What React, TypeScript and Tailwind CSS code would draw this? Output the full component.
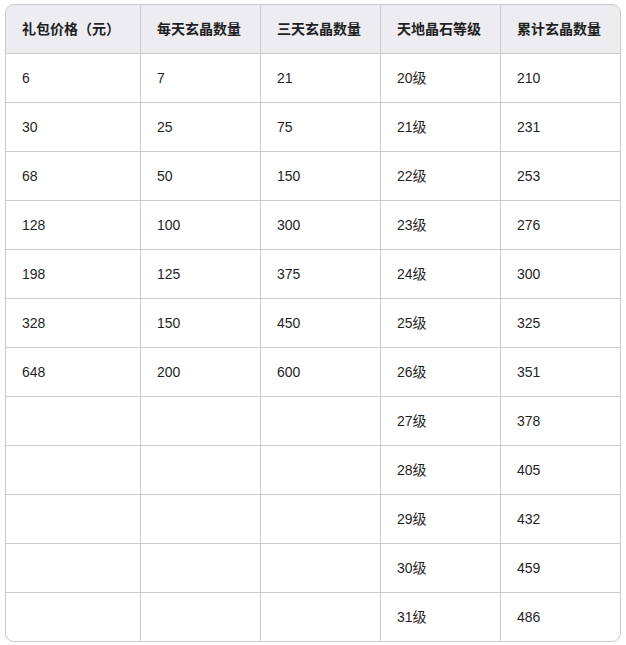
import React from "react";

const headers = ["礼包价格（元）", "每天玄晶数量", "三天玄晶数量", "天地晶石等级", "累计玄晶数量"];
const rows: string[][] = [
  ["6", "7", "21", "20级", "210"],
  ["30", "25", "75", "21级", "231"],
  ["68", "50", "150", "22级", "253"],
  ["128", "100", "300", "23级", "276"],
  ["198", "125", "375", "24级", "300"],
  ["328", "150", "450", "25级", "325"],
  ["648", "200", "600", "26级", "351"],
  ["", "", "", "27级", "378"],
  ["", "", "", "28级", "405"],
  ["", "", "", "29级", "432"],
  ["", "", "", "30级", "459"],
  ["", "", "", "31级", "486"],
];

export default function App() {
  return (
    <div
      className="w-[626px] h-[645px] bg-white pl-[5px] pt-[4px]"
      style={{ fontFamily: '"Liberation Sans", Arial, "Noto Sans CJK SC", sans-serif' }}
    >
      <div className="w-[616px] rounded-[9px] border border-[#cacacf] bg-[#cacacf] overflow-hidden">
        <div className="grid grid-cols-[134px_119px_119px_119px_119px] gap-px">
          {headers.map((h, i) => (
            <div
              key={"h" + i}
              className="h-[48px] bg-[#ececf1] flex items-center pl-[16px] text-[14px] font-bold text-[#1f1f1f]"
            >
              {h}
            </div>
          ))}
          {rows.map((r, ri) =>
            r.map((c, ci) => (
              <div
                key={ri + "-" + ci}
                className="h-[48px] bg-white flex items-center pl-[16px] text-[14px] text-[#1f1f1f]"
              >
                {c}
              </div>
            ))
          )}
        </div>
      </div>
    </div>
  );
}
